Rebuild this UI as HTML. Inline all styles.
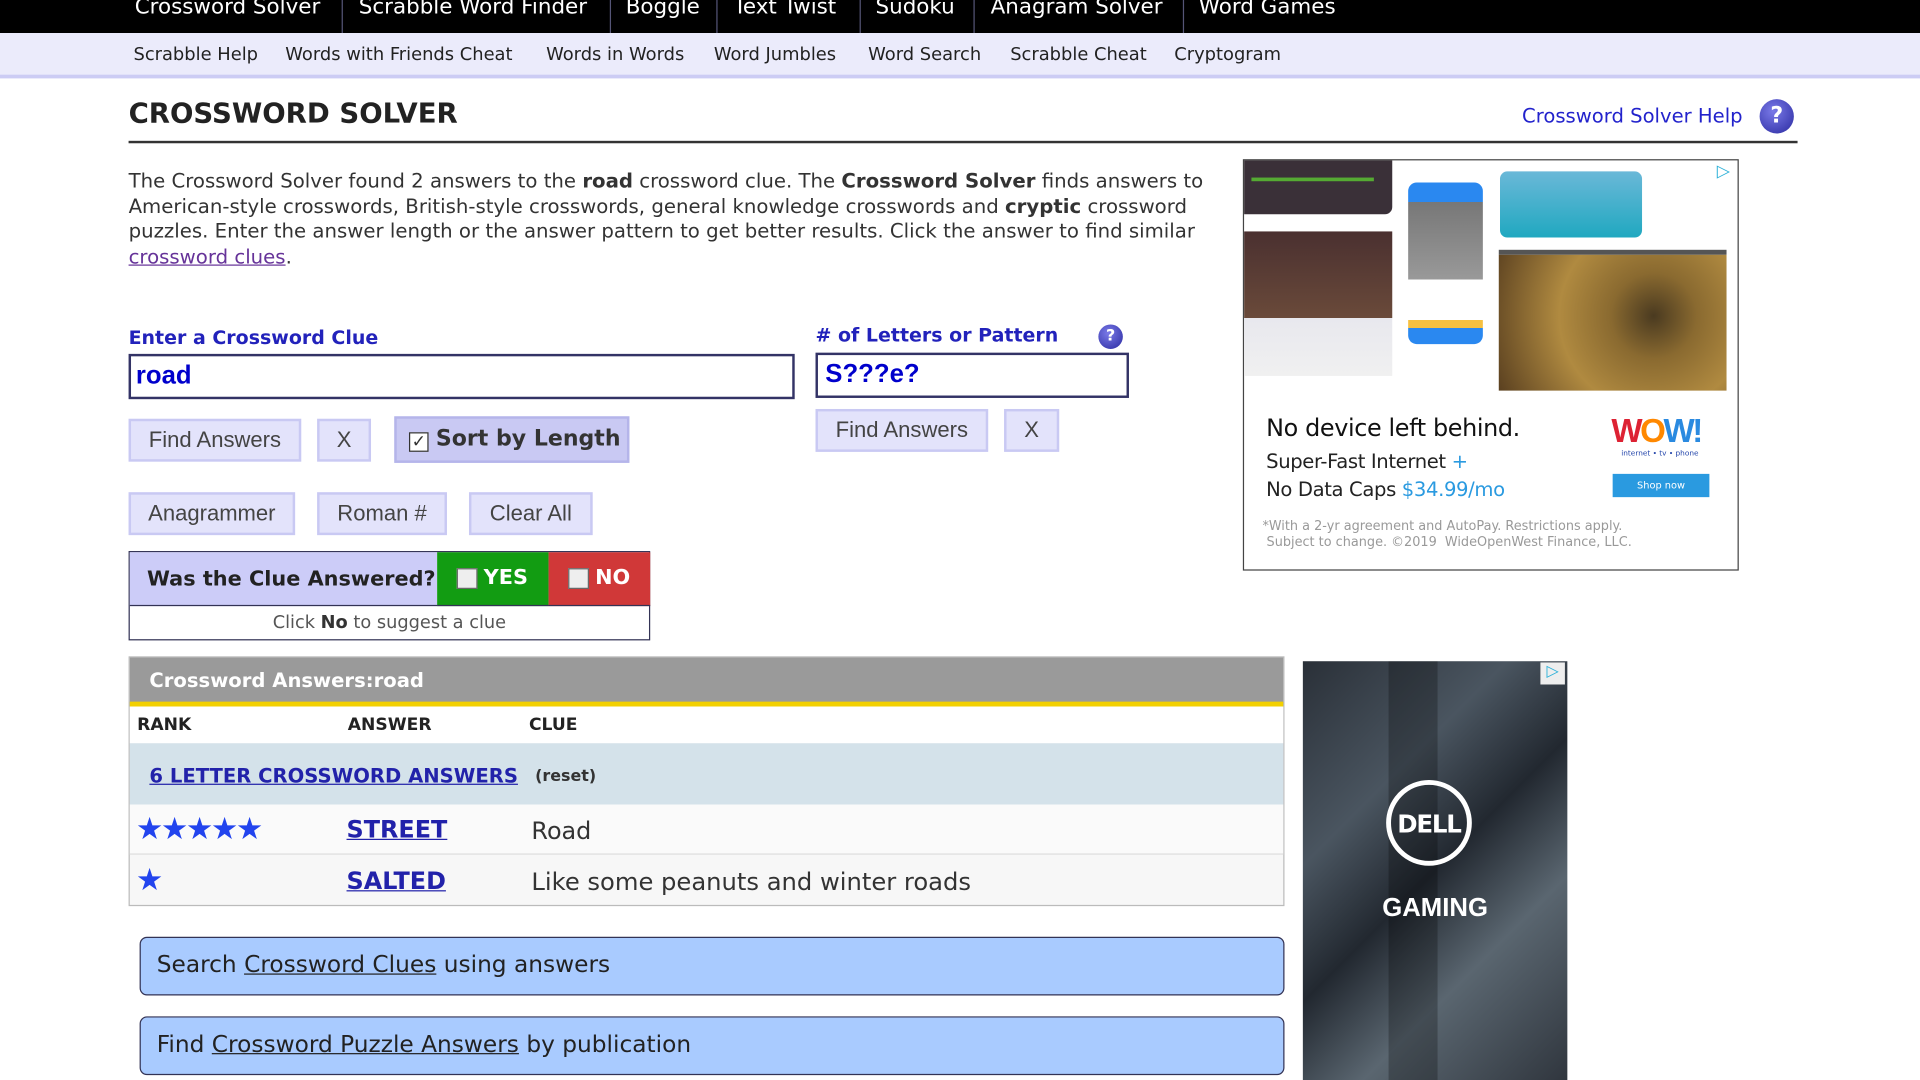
<!DOCTYPE html>
<html><head><meta charset="utf-8">
<style>
html,body{margin:0;padding:0;width:1920px;height:1080px;overflow:hidden;background:#fff}
#w{position:absolute;left:0;top:0;width:1568px;height:882px;transform:scale(1.22449);transform-origin:0 0;font-family:"DejaVu Sans","Liberation Sans",sans-serif;color:#333}
.a{position:absolute;white-space:nowrap}
#top{left:0;top:0;width:1568px;height:27px;background:#000}
#top span{position:absolute;top:-4px;color:#fff;font-size:17.5px;font-family:"DejaVu Sans",sans-serif}
.sep{position:absolute;top:0;width:1px;height:27px;background:#557}
#sub{left:0;top:27px;width:1568px;height:34px;background:#ebebfb;border-bottom:3px solid #ccccf4}
#sub span{position:absolute;top:9px;font-size:14.6px;color:#222;font-family:"DejaVu Sans",sans-serif}
.btn{position:absolute;background:#e3e3fb;border:2px solid #c9c9f3;font-family:"Liberation Sans",sans-serif;font-size:18px;color:#444;text-align:center;box-sizing:border-box}
.lbl{font-weight:bold;color:#2222bb;font-size:15.5px}
.inp{position:absolute;border:2px solid #333366;box-sizing:border-box;background:#fff;font-weight:bold;color:#0000cc;font-size:21px;font-family:"Liberation Sans",sans-serif}
p{margin:0}
.star{color:#2244ee;font-size:25px;letter-spacing:-2px}
.lnk{color:#2222aa;text-decoration:underline}
</style></head><body><div id="w">
<div id="top" class="a">
<span style="left:110px">Crossword Solver</span><div class="sep" style="left:279px"></div>
<span style="left:293px">Scrabble Word Finder</span><div class="sep" style="left:498px"></div>
<span style="left:511px">Boggle</span><div class="sep" style="left:585px"></div>
<span style="left:599px">Text Twist</span><div class="sep" style="left:702px"></div>
<span style="left:715px">Sudoku</span><div class="sep" style="left:795px"></div>
<span style="left:809px">Anagram Solver</span><div class="sep" style="left:966px"></div>
<span style="left:979px">Word Games</span>
</div>
<div id="sub" class="a">
<span style="left:109px">Scrabble Help</span>
<span style="left:233px">Words with Friends Cheat</span>
<span style="left:446px">Words in Words</span>
<span style="left:583px">Word Jumbles</span>
<span style="left:709px">Word Search</span>
<span style="left:825px">Scrabble Cheat</span>
<span style="left:959px">Cryptogram</span>
</div>
<div class="a" style="left:105px;top:80px;font-size:22.5px;font-weight:bold;color:#222">CROSSWORD SOLVER</div>
<div class="a" style="left:1243px;top:85px;font-size:16px;color:#2222cc">Crossword Solver Help</div>
<div class="a" style="left:1437px;top:81px;width:28px;height:28px;border-radius:50%;background:radial-gradient(circle at 40% 35%,#7a7ae8,#2a2aa0);color:#fff;font-weight:bold;font-size:18px;text-align:center;line-height:28px">?</div>
<div class="a" style="left:105px;top:115px;width:1363px;height:2px;background:#333"></div>
<div class="a" style="left:105px;top:138px;line-height:20.5px;color:#333;font-size:16.1px">
<p>The Crossword Solver found 2 answers to the <b>road</b> crossword clue. The <b>Crossword Solver</b> finds answers to</p>
<p>American-style crosswords, British-style crosswords, general knowledge crosswords and <b>cryptic</b> crossword</p>
<p>puzzles. Enter the answer length or the answer pattern to get better results. Click the answer to find similar</p>
<p><span style="color:#663399;text-decoration:underline">crossword clues</span>.</p>
</div>
<div class="a lbl" style="left:105px;top:267px">Enter a Crossword Clue</div>
<div class="inp" style="left:105px;top:289px;width:544px;height:37px;padding:4px 0 0 4px">road</div>
<div class="btn" style="left:105px;top:342px;width:141px;height:35px;line-height:31px">Find Answers</div>
<div class="btn" style="left:259px;top:342px;width:44px;height:35px;line-height:31px">X</div>
<div class="btn" style="left:322px;top:340px;width:192px;height:38px;line-height:34px;background:#c9c9f3;border-color:#b5b5ea;font-weight:bold;color:#333;font-family:'DejaVu Sans',sans-serif;font-size:18px;text-align:left;padding-left:10px"><span style="display:inline-block;width:14px;height:14px;border:1.5px solid #333;background:#fff;font-size:14px;line-height:14px;text-align:center;vertical-align:-1px;margin-right:6px">✓</span>Sort by Length</div>
<div class="btn" style="left:105px;top:402px;width:136px;height:35px;line-height:31px">Anagrammer</div>
<div class="btn" style="left:259px;top:402px;width:106px;height:35px;line-height:31px">Roman #</div>
<div class="btn" style="left:383px;top:402px;width:101px;height:35px;line-height:31px">Clear All</div>
<div class="a" style="left:105px;top:450px;width:426px;height:73px;border:1px solid #335;box-sizing:border-box;background:#fff">
 <div class="a" style="left:0;top:0;width:251px;height:43px;background:#ccccf8;border-bottom:1px solid #335"></div>
 <div class="a" style="left:14px;top:12px;font-weight:bold;font-size:17px;color:#222">Was the Clue Answered?</div>
 <div class="a" style="left:251px;top:0;width:91px;height:43px;background:#129c12;border-bottom:1px solid #335"></div>
 <div class="a" style="left:342px;top:0;width:83px;height:43px;background:#d03838;border-bottom:1px solid #335"></div>
 <div class="a" style="left:267px;top:13px;width:15px;height:15px;background:#eee;border:1px solid #666"></div>
 <div class="a" style="left:289px;top:11px;font-weight:bold;color:#fff;font-size:17px">YES</div>
 <div class="a" style="left:358px;top:13px;width:15px;height:15px;background:#eee;border:1px solid #666"></div>
 <div class="a" style="left:380px;top:11px;font-weight:bold;color:#fff;font-size:17px">NO</div>
 <div class="a" style="left:0;width:424px;top:50px;text-align:center;font-size:14.5px;color:#555">Click <b style="color:#333">No</b> to suggest a clue</div>
</div>
<div class="a lbl" style="left:666px;top:265px">#&nbsp;of Letters or Pattern</div>
<div class="a" style="left:897px;top:265px;width:20px;height:20px;border-radius:50%;background:radial-gradient(circle at 40% 35%,#7a7ae8,#2a2aa0);color:#fff;font-weight:bold;font-size:13px;text-align:center;line-height:20px">?</div>
<div class="inp" style="left:666px;top:288px;width:256px;height:37px;padding:4px 0 0 6px">S???e?</div>
<div class="btn" style="left:666px;top:334px;width:141px;height:35px;line-height:31px">Find Answers</div>
<div class="btn" style="left:820px;top:334px;width:45px;height:35px;line-height:31px">X</div>
<!-- ad 1 -->
<div class="a" style="left:1015px;top:130px;width:405px;height:336px;border:1px solid #444;box-sizing:border-box;background:#fff;overflow:hidden">
 <div class="a" style="left:0;top:0;width:121px;height:44px;background:#3a3038;border-radius:0 0 6px 0"></div>
 <div class="a" style="left:6px;top:14px;width:100px;height:3px;background:#5a3"></div>
 <div class="a" style="left:0;top:58px;width:121px;height:118px;background:linear-gradient(#4a3030 0,#6a4a3a 60%,#e8e8ee 60%,#f0f0f0)"></div>
 <div class="a" style="left:134px;top:18px;width:61px;height:132px;background:linear-gradient(#2a88f0 0,#2a88f0 12%,#777 12%,#999 60%,#fff 60%,#fff 85%,#f6c040 85%,#f6c040 90%,#2a88f0 90%);border-radius:7px"></div>
 <div class="a" style="left:209px;top:9px;width:116px;height:54px;background:linear-gradient(#6ab8d8,#20a8c0);border-radius:6px"></div>
 <div class="a" style="left:208px;top:73px;width:186px;height:111px;background:radial-gradient(circle at 68% 45%,#4a3a20 0,#8a6a30 25%,#b08a40 55%,#5a4020 100%);border-top:4px solid #555"></div>
 <div class="a" style="left:18px;top:207px;font-family:'DejaVu Sans',sans-serif;font-size:19.5px;color:#111;letter-spacing:-0.3px">No device left behind.</div>
 <div class="a" style="left:18px;top:236px;font-size:16px;color:#222;letter-spacing:-0.3px">Super-Fast Internet <span style="color:#2a9ae0">+</span></div>
 <div class="a" style="left:18px;top:259px;font-size:16px;color:#222;letter-spacing:-0.3px">No Data Caps <span style="color:#2a9ae0">$34.99/mo</span></div>
 <div class="a" style="left:300px;top:206px;font-size:27px;font-weight:bold;font-family:'Liberation Sans',sans-serif;letter-spacing:-2px;color:#d23"><span>W</span><span style="color:#f80">O</span><span style="color:#2a8ae0">W!</span></div>
 <div class="a" style="left:308px;top:236px;font-size:6px;color:#24a">internet • tv • phone</div>
 <div class="a" style="left:301px;top:256px;width:79px;height:19px;background:#2a9ae0;color:#fff;font-size:8px;text-align:center;line-height:19px">Shop now</div>
 <div class="a" style="left:15px;top:293px;font-size:10.5px;color:#999;line-height:13px">*With a 2-yr agreement and AutoPay. Restrictions apply.<br>&nbsp;Subject to change. ©2019 &nbsp;WideOpenWest Finance, LLC.</div>
 <div class="a" style="left:386px;top:1px;color:#2ab0d8;font-size:14px">▷</div>
</div>
<!-- answers table -->
<div class="a" style="left:105px;top:536px;width:944px;height:204px;border:1px solid #bbb;box-sizing:border-box;background:#f7f7f7">
 <div class="a" style="left:0;top:0;width:942px;height:36px;background:#9a9a9a;border-bottom:4px solid #f2d000"></div>
 <div class="a" style="left:16px;top:9px;color:#fff;font-weight:bold;font-size:16px">Crossword Answers:road</div>
 <div class="a" style="left:0;top:40px;width:942px;height:30px;background:#fff"></div>
 <div class="a" style="left:6px;top:47px;font-weight:bold;font-size:14px;color:#222">RANK</div>
 <div class="a" style="left:178px;top:47px;font-weight:bold;font-size:14px;color:#222">ANSWER</div>
 <div class="a" style="left:326px;top:47px;font-weight:bold;font-size:14px;color:#222">CLUE</div>
 <div class="a" style="left:0;top:70px;width:942px;height:50px;background:#d4e2ea"></div>
 <div class="a lnk" style="left:16px;top:87px;font-weight:bold;font-size:16px">6 LETTER CROSSWORD ANSWERS</div>
 <div class="a" style="left:331px;top:90px;font-weight:bold;font-size:13px;color:#333">(reset)</div>
 <div class="a" style="left:0;top:120px;width:942px;height:40px;background:#fafafa;border-bottom:1px solid #ddd"></div>
 <div class="a star" style="left:5px;top:125px">★★★★★</div>
 <div class="a lnk" style="left:177px;top:129px;font-weight:bold;font-size:19.5px">STREET</div>
 <div class="a" style="left:328px;top:130px;font-size:19.5px;color:#333">Road</div>
 <div class="a star" style="left:5px;top:167px">★</div>
 <div class="a lnk" style="left:177px;top:171px;font-weight:bold;font-size:19.5px">SALTED</div>
 <div class="a" style="left:328px;top:172px;font-size:19.8px;color:#333">Like some peanuts and winter roads</div>
</div>
<div class="a" style="left:114px;top:765px;width:935px;height:48px;background:#a9cbff;border:1px solid #335;border-radius:6px;box-sizing:border-box;font-size:19px;color:#222;padding:11px 0 0 13px">Search <u>Crossword Clues</u> using answers</div>
<div class="a" style="left:114px;top:830px;width:935px;height:48px;background:#a9cbff;border:1px solid #335;border-radius:6px;box-sizing:border-box;font-size:19px;color:#222;padding:11px 0 0 13px">Find <u>Crossword Puzzle Answers</u> by publication</div>
<!-- dell ad -->
<div class="a" style="left:1064px;top:540px;width:216px;height:342px;background:linear-gradient(135deg,#2a3038 0,#4a5560 30%,#222830 50%,#5a6670 70%,#30363e 100%);overflow:hidden">
 <div class="a" style="left:70px;top:0;width:40px;height:342px;background:rgba(0,0,0,.25)"></div>
 <div class="a" style="left:68px;top:97px;width:70px;height:70px;border:4px solid #fff;border-radius:50%;box-sizing:border-box"></div>
 <div class="a" style="left:68px;top:121px;width:70px;text-align:center;color:#fff;font-weight:bold;font-size:20px;letter-spacing:-1px">DELL</div>
 <div class="a" style="left:0;width:216px;top:190px;text-align:center;color:#fff;font-weight:bold;font-size:21px;font-family:'Liberation Sans',sans-serif">GAMING</div>
 <div class="a" style="left:194px;top:1px;width:20px;height:18px;background:#eee;color:#2ab0d8;font-size:13px;text-align:center">▷</div>
</div>
</div></body></html>
